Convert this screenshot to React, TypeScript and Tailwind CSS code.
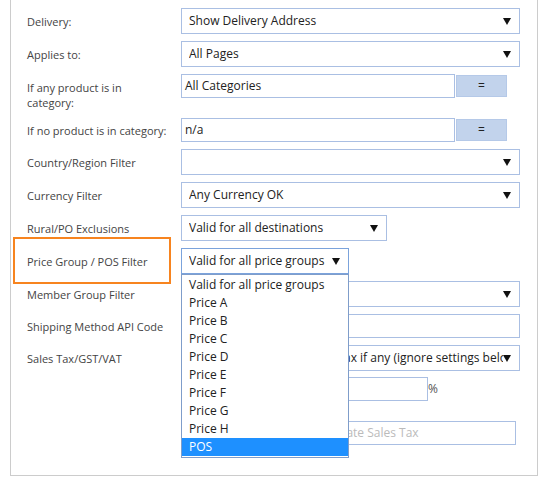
import React from 'react';

const Caret = () => (
  <svg width="8" height="7" viewBox="0 0 8 7" className="shrink-0">
    <polygon points="0,0 8,0 4,7" fill="#111" />
  </svg>
);

const SelectBox: React.FC<{ value: string; width: string; focused?: boolean; children?: React.ReactNode }> = ({
  value,
  width,
  focused,
  children,
}) => (
  <div className={`relative ${width}`}>
    <div
      className={`flex h-[26px] items-center border bg-white pl-[7px] pr-[8px] ${
        focused ? 'border-[#7ba3dc]' : 'border-[#aabfe3]'
      }`}
    >
      <span className="flex-1 overflow-hidden whitespace-nowrap pr-[13px] text-[#222]">{value}</span>
      <Caret />
    </div>
    {children}
  </div>
);

const TextBox: React.FC<{ value?: string; width: string }> = ({ value, width }) => (
  <div className={`flex h-[24px] items-center border border-[#aabfe3] bg-white pl-[3px] text-[#222] ${width}`}>
    {value}
  </div>
);

const EqButton = () => (
  <div className="ml-px flex h-[22px] w-[51px] items-center justify-center border border-[#b5c9e8] bg-[#c2d3ec] text-[12px] text-[#222]">
    =
  </div>
);

const Row: React.FC<{ label: React.ReactNode; className?: string; labelClass?: string; children: React.ReactNode }> = ({
  label,
  className = 'mt-[7px] h-[26px] items-center',
  labelClass = '',
  children,
}) => (
  <div className={`flex ${className}`}>
    <div className={`w-[170px] shrink-0 whitespace-nowrap pl-[16px] text-[11px] leading-[15px] text-[#444] ${labelClass}`}>
      {label}
    </div>
    {children}
  </div>
);

const priceOptions = [
  'Valid for all price groups',
  'Price A',
  'Price B',
  'Price C',
  'Price D',
  'Price E',
  'Price F',
  'Price G',
  'Price H',
  'POS',
];

export default function App() {
  return (
    <div className="min-h-screen bg-white font-['Open_Sans',sans-serif] text-[12px]">
      <div className="relative ml-[10px] w-[528px] border-x border-b border-[#cccccc] pb-[30px] pt-px">
        <Row label="Delivery:">
          <SelectBox value="Show Delivery Address" width="w-[339px]" />
        </Row>
        <Row label="Applies to:">
          <SelectBox value="All Pages" width="w-[339px]" />
        </Row>
        <Row
          label={
            <>
              If any product is in
              <br />
              category:
            </>
          }
          className="mt-[7px] h-[37px] items-start"
          labelClass="pt-[6px]"
        >
          <div className="flex items-center">
            <TextBox value="All Categories" width="w-[274px]" />
            <EqButton />
          </div>
        </Row>
        <Row label="If no product is in category:" className="mt-[7px] h-[24px] items-center">
          <div className="flex items-center">
            <TextBox value="n/a" width="w-[274px]" />
            <EqButton />
          </div>
        </Row>
        <Row label="Country/Region Filter">
          <SelectBox value="" width="w-[339px]" />
        </Row>
        <Row label="Currency Filter">
          <SelectBox value="Any Currency OK" width="w-[339px]" />
        </Row>
        <Row label="Rural/PO Exclusions">
          <SelectBox value="Valid for all destinations" width="w-[206px]" />
        </Row>
        <Row label="Price Group / POS Filter">
          <SelectBox value="Valid for all price groups" width="w-[168px]" focused>
            <div className="absolute left-0 top-full z-20 w-full border border-[#7f9dca] bg-white py-px">
              {priceOptions.map((o) => (
                <div
                  key={o}
                  className={`h-[18px] pl-[7px] leading-[18px] ${
                    o === 'POS' ? 'bg-[#1e90ff] text-white' : 'text-[#222]'
                  }`}
                >
                  {o}
                </div>
              ))}
            </div>
          </SelectBox>
        </Row>
        <Row label="Member Group Filter">
          <SelectBox value="" width="w-[339px]" />
        </Row>
        <Row label="Shipping Method API Code" className="mt-[7px] h-[24px] items-center">
          <TextBox width="w-[339px]" />
        </Row>
        <Row label="Sales Tax/GST/VAT">
          <SelectBox value="Use the Global Shop Sales Tax if any (ignore settings below)" width="w-[339px]" />
        </Row>
        <Row label="" className="mt-[6px] h-[24px] items-center">
          <TextBox width="w-[247px]" />
          <span className="text-[#555]">%</span>
        </Row>
        <Row label="" className="mt-[20px] h-[24px] items-center">
          <div className="flex h-[24px] w-[335px] items-center border border-[#aabfe3] bg-white pl-[131px] text-[#bbb]">
            Calculate Sales Tax
          </div>
        </Row>

        {/* highlight around the price group label */}
        <div className="pointer-events-none absolute left-[2px] top-[237px] h-[47px] w-[158px] border-2 border-[#f7841f]" />
      </div>
    </div>
  );
}
